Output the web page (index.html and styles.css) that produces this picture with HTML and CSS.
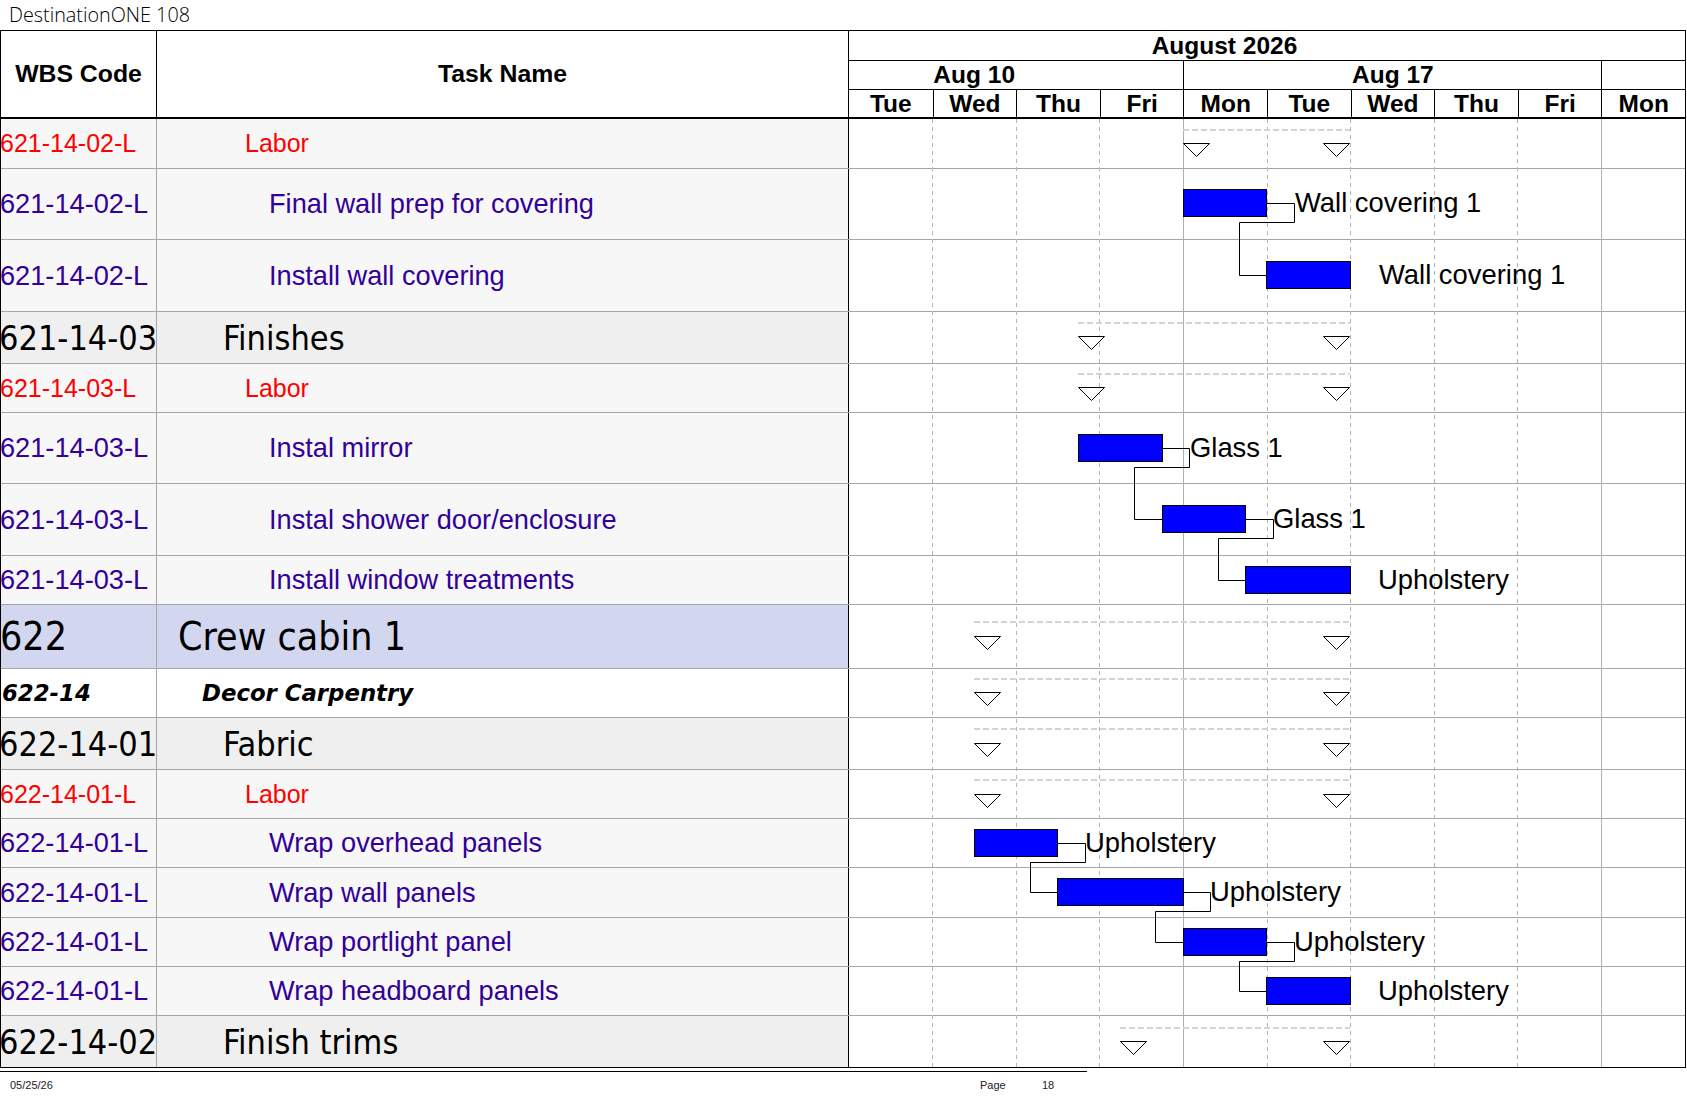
FILE: index.html
```html
<!DOCTYPE html>
<html lang="en">
<head>
<meta charset="utf-8">
<title>DestinationONE 108</title>
<link rel="stylesheet" href="styles.css">
</head>
<body>
<div class="title">DestinationONE 108</div>
<div class="sheet">
  <div class="head">
    <div class="hcell">WBS Code</div>
    <div class="hcell">Task Name</div>
    <div class="timescale">
      <div class="month">August 2026</div>
      <div class="weeks">
        <div class="week w4">Aug 10</div>
        <div class="week w5">Aug 17</div>
        <div class="week w1"></div>
      </div>
      <div class="days">
        <div class="day">Tue</div>
        <div class="day">Wed</div>
        <div class="day">Thu</div>
        <div class="day">Fri</div>
        <div class="day">Mon</div>
        <div class="day">Tue</div>
        <div class="day">Wed</div>
        <div class="day">Thu</div>
        <div class="day">Fri</div>
        <div class="day">Mon</div>
      </div>
    </div>
  </div>
  <div class="body">
    <div class="row labor h50"><div class="wbs">621-14-02-L</div><div class="name">Labor</div><div class="gcell"></div></div>
    <div class="row task h71"><div class="wbs">621-14-02-L</div><div class="name">Final wall prep for covering</div><div class="gcell"></div></div>
    <div class="row task h72"><div class="wbs">621-14-02-L</div><div class="name">Install wall covering</div><div class="gcell"></div></div>
    <div class="row group h52"><div class="wbs">621-14-03</div><div class="name">Finishes</div><div class="gcell"></div></div>
    <div class="row labor h49"><div class="wbs">621-14-03-L</div><div class="name">Labor</div><div class="gcell"></div></div>
    <div class="row task h71"><div class="wbs">621-14-03-L</div><div class="name">Instal mirror</div><div class="gcell"></div></div>
    <div class="row task h72"><div class="wbs">621-14-03-L</div><div class="name">Instal shower door/enclosure</div><div class="gcell"></div></div>
    <div class="row task h49"><div class="wbs">621-14-03-L</div><div class="name">Install window treatments</div><div class="gcell"></div></div>
    <div class="row crew h64"><div class="wbs">622</div><div class="name">Crew cabin 1</div><div class="gcell"></div></div>
    <div class="row decor h49"><div class="wbs">622-14</div><div class="name">Decor Carpentry</div><div class="gcell"></div></div>
    <div class="row group h52"><div class="wbs">622-14-01</div><div class="name">Fabric</div><div class="gcell"></div></div>
    <div class="row labor h49"><div class="wbs">622-14-01-L</div><div class="name">Labor</div><div class="gcell"></div></div>
    <div class="row task h49"><div class="wbs">622-14-01-L</div><div class="name">Wrap overhead panels</div><div class="gcell"></div></div>
    <div class="row task h50"><div class="wbs">622-14-01-L</div><div class="name">Wrap wall panels</div><div class="gcell"></div></div>
    <div class="row task h49"><div class="wbs">622-14-01-L</div><div class="name">Wrap portlight panel</div><div class="gcell"></div></div>
    <div class="row task h49"><div class="wbs">622-14-01-L</div><div class="name">Wrap headboard panels</div><div class="gcell"></div></div>
    <div class="row group h51 last"><div class="wbs">622-14-02</div><div class="name">Finish trims</div><div class="gcell"></div></div>

    <div class="chart">
      <svg class="chart-svg" width="836" height="948" viewBox="0 0 836 948">
        <g class="vl-dash">
          <line x1="83.5" y1="0" x2="83.5" y2="948"/>
          <line x1="167.5" y1="0" x2="167.5" y2="948"/>
          <line x1="250.5" y1="0" x2="250.5" y2="948"/>
          <line x1="418.5" y1="0" x2="418.5" y2="948"/>
          <line x1="501.5" y1="0" x2="501.5" y2="948"/>
          <line x1="585.5" y1="0" x2="585.5" y2="948"/>
          <line x1="668.5" y1="0" x2="668.5" y2="948"/>
        </g>
        <g class="vl-solid">
          <line x1="334.5" y1="0" x2="334.5" y2="948"/>
          <line x1="752.5" y1="0" x2="752.5" y2="948"/>
        </g>
        <g class="summary">
          <line x1="334" y1="11" x2="501" y2="11"/>
          <line x1="229" y1="204" x2="501" y2="204"/>
          <line x1="229" y1="255" x2="501" y2="255"/>
          <line x1="125" y1="503" x2="501" y2="503"/>
          <line x1="125" y1="560" x2="501" y2="560"/>
          <line x1="125" y1="610" x2="501" y2="610"/>
          <line x1="125" y1="661" x2="501" y2="661"/>
          <line x1="271" y1="909" x2="501" y2="909"/>
        </g>
        <g class="tri">
          <polygon points="334.5,24.5 360.5,24.5 347.5,37.5"/>
          <polygon points="474.5,24.5 500.5,24.5 487.5,37.5"/>
          <polygon points="229.5,217.5 255.5,217.5 242.5,230.5"/>
          <polygon points="474.5,217.5 500.5,217.5 487.5,230.5"/>
          <polygon points="229.5,268.5 255.5,268.5 242.5,281.5"/>
          <polygon points="474.5,268.5 500.5,268.5 487.5,281.5"/>
          <polygon points="125.5,517.5 151.5,517.5 138.5,530.5"/>
          <polygon points="474.5,517.5 500.5,517.5 487.5,530.5"/>
          <polygon points="125.5,573.5 151.5,573.5 138.5,586.5"/>
          <polygon points="474.5,573.5 500.5,573.5 487.5,586.5"/>
          <polygon points="125.5,624.5 151.5,624.5 138.5,637.5"/>
          <polygon points="474.5,624.5 500.5,624.5 487.5,637.5"/>
          <polygon points="125.5,675.5 151.5,675.5 138.5,688.5"/>
          <polygon points="474.5,675.5 500.5,675.5 487.5,688.5"/>
          <polygon points="271.5,922.5 297.5,922.5 284.5,935.5"/>
          <polygon points="474.5,922.5 500.5,922.5 487.5,935.5"/>
        </g>
        <g class="link">
          <polyline points="418,84.5 445.5,84.5 445.5,103.5 390.5,103.5 390.5,156.5 417.5,156.5"/>
          <polyline points="313,329.5 340.5,329.5 340.5,348.5 285.5,348.5 285.5,400.5 313.5,400.5"/>
          <polyline points="396,400.5 424.5,400.5 424.5,419.5 369.5,419.5 369.5,461.5 396.5,461.5"/>
          <polyline points="208,724.5 236.5,724.5 236.5,743.5 181.5,743.5 181.5,773.5 208.5,773.5"/>
          <polyline points="334,773.5 361.5,773.5 361.5,792.5 306.5,792.5 306.5,823.5 334.5,823.5"/>
          <polyline points="418,823.5 445.5,823.5 445.5,842.5 390.5,842.5 390.5,872.5 417.5,872.5"/>
        </g>
        <g class="bar">
          <rect x="334.5" y="70.5" width="83" height="27"/>
          <rect x="417.5" y="142.5" width="84" height="27"/>
          <rect x="229.5" y="315.5" width="84" height="27"/>
          <rect x="313.5" y="386.5" width="83" height="27"/>
          <rect x="396.5" y="447.5" width="105" height="27"/>
          <rect x="125.5" y="710.5" width="83" height="27"/>
          <rect x="208.5" y="759.5" width="126" height="27"/>
          <rect x="334.5" y="809.5" width="83" height="27"/>
          <rect x="417.5" y="858.5" width="84" height="27"/>
        </g>
      </svg>
      <span class="lbl" style="left:446px;top:69px">Wall covering 1</span>
      <span class="lbl" style="left:530px;top:141px">Wall covering 1</span>
      <span class="lbl" style="left:341px;top:314px">Glass 1</span>
      <span class="lbl" style="left:424px;top:385px">Glass 1</span>
      <span class="lbl" style="left:529px;top:446px">Upholstery</span>
      <span class="lbl" style="left:236px;top:709px">Upholstery</span>
      <span class="lbl" style="left:361px;top:758px">Upholstery</span>
      <span class="lbl" style="left:445px;top:808px">Upholstery</span>
      <span class="lbl" style="left:529px;top:857px">Upholstery</span>
    </div>
  </div>
</div>
<div class="footer">
  <span>05/25/26</span>
  <span>Page</span>
  <span>18</span>
</div>
</body>
</html>
```

FILE: styles.css
```css
* {
  box-sizing: border-box;
  margin: 0;
  padding: 0;
}

html, body {
  background: #fff;
}

body {
  width: 1687px;
  height: 1097px;
  overflow: hidden;
  font-family: "Liberation Sans", Arial, sans-serif;
  color: #000;
}

.title {
  height: 30px;
  line-height: 30px;
  padding-left: 9px;
  font-family: "Open Sans", "Noto Sans", sans-serif;
  font-weight: 300;
  font-size: 19.8px;
  color: #000;
  white-space: nowrap;
}

.sheet {
  width: 1686px;
  border: 1px solid #000;
}

/* ---------- header ---------- */
.head {
  display: grid;
  grid-template-columns: 156px 692px 836px;
  height: 88px;
  border-bottom: 2px solid #000;
}

.hcell {
  display: flex;
  align-items: center;
  justify-content: center;
  border-right: 1px solid #000;
  font-weight: 700;
  font-size: 24.8px;
  white-space: nowrap;
}

.timescale {
  display: grid;
  grid-template-rows: 30px 29px 27px;
  font-weight: 700;
  font-size: 24.5px;
}

.month {
  display: flex;
  align-items: center;
  justify-content: center;
  padding-right: 85px;
  border-bottom: 1px solid #000;
  white-space: nowrap;
}

.weeks,
.days {
  display: grid;
  grid-template-columns: repeat(10, 1fr);
}

.weeks {
  border-bottom: 1px solid #000;
}

.week {
  display: flex;
  align-items: center;
  justify-content: center;
  white-space: nowrap;
}

.week.w4 {
  grid-column: span 4;
  padding-right: 84px;
}

.week.w5 {
  grid-column: span 5;
  border-left: 1px solid #000;
}

.week.w1 {
  grid-column: span 1;
  border-left: 1px solid #000;
}

.day {
  display: flex;
  align-items: center;
  justify-content: center;
}

.day + .day {
  border-left: 1px solid #000;
}

/* ---------- body rows ---------- */
.body {
  position: relative;
}

.row {
  display: grid;
  grid-template-columns: 156px 692px 836px;
  border-bottom: 1px solid #a6a6a6;
  background: #f7f7f7;
}

.row.last {
  border-bottom: 0;
}

.h49 { height: 49px; }
.h50 { height: 50px; }
.h51 { height: 51px; }
.h52 { height: 52px; }
.h64 { height: 64px; }
.h71 { height: 71px; }
.h72 { height: 72px; }

.wbs,
.name {
  display: flex;
  align-items: center;
  white-space: nowrap;
  overflow: hidden;
}

.wbs {
  border-right: 1px solid #a6a6a6;
  margin-left: -1px;
}

.name {
  border-right: 1px solid #000;
}

.gcell {
  background: #fff;
}

.labor {
  color: #ff0000;
  font-size: 25px;
}

.labor .name {
  padding-left: 88px;
}

.task {
  color: #330099;
  font-size: 27.2px;
}

.task .name {
  padding-left: 112px;
}

.group {
  background: #efefef;
  font-family: "DejaVu Sans Condensed", "DejaVu Sans", sans-serif;
  font-stretch: condensed;
  font-size: 34px;
}

.group .wbs {
  margin-left: -2px;
}

.group .name {
  padding-left: 66px;
}

.crew {
  background: #d2d6ef;
  font-family: "DejaVu Sans Condensed", "DejaVu Sans", sans-serif;
  font-stretch: condensed;
  font-size: 39px;
}

.crew .name {
  padding-left: 21px;
}

.decor {
  background: #fff;
  font-family: "DejaVu Sans", sans-serif;
  font-weight: 700;
  font-style: italic;
  font-size: 22.8px;
}

.decor .wbs {
  margin-left: 0;
  padding-left: 1px;
}

.decor .name {
  padding-left: 45px;
}

/* ---------- gantt chart canvas ---------- */
.chart {
  position: absolute;
  left: 848px;
  top: 0;
  width: 836px;
  height: 948px;
}

.chart-svg {
  position: absolute;
  left: 0;
  top: 0;
  display: block;
}

.vl-dash line {
  stroke: #b4b4b4;
  stroke-width: 1;
  stroke-dasharray: 4 4;
}

.vl-solid line {
  stroke: #b0b0b0;
  stroke-width: 1;
}

.summary line {
  stroke: #d4d4d4;
  stroke-width: 2;
  stroke-dasharray: 6 3;
}

.tri polygon {
  fill: #fff;
  stroke: #000;
  stroke-width: 1;
}

.link polyline {
  fill: none;
  stroke: #000;
  stroke-width: 1;
}

.bar rect {
  fill: #0000ff;
  stroke: #000;
  stroke-width: 1;
}

.lbl {
  position: absolute;
  font-size: 27.4px;
  line-height: 30px;
  white-space: nowrap;
  color: #000;
}

/* ---------- footer ---------- */
.footer {
  width: 1087px;
  margin-top: 3px;
  border-top: 1px solid #000;
  display: grid;
  grid-template-columns: 970px 62px auto;
  padding-left: 10px;
  height: 26px;
  align-items: center;
  font-size: 11px;
  color: #222;
}
```
